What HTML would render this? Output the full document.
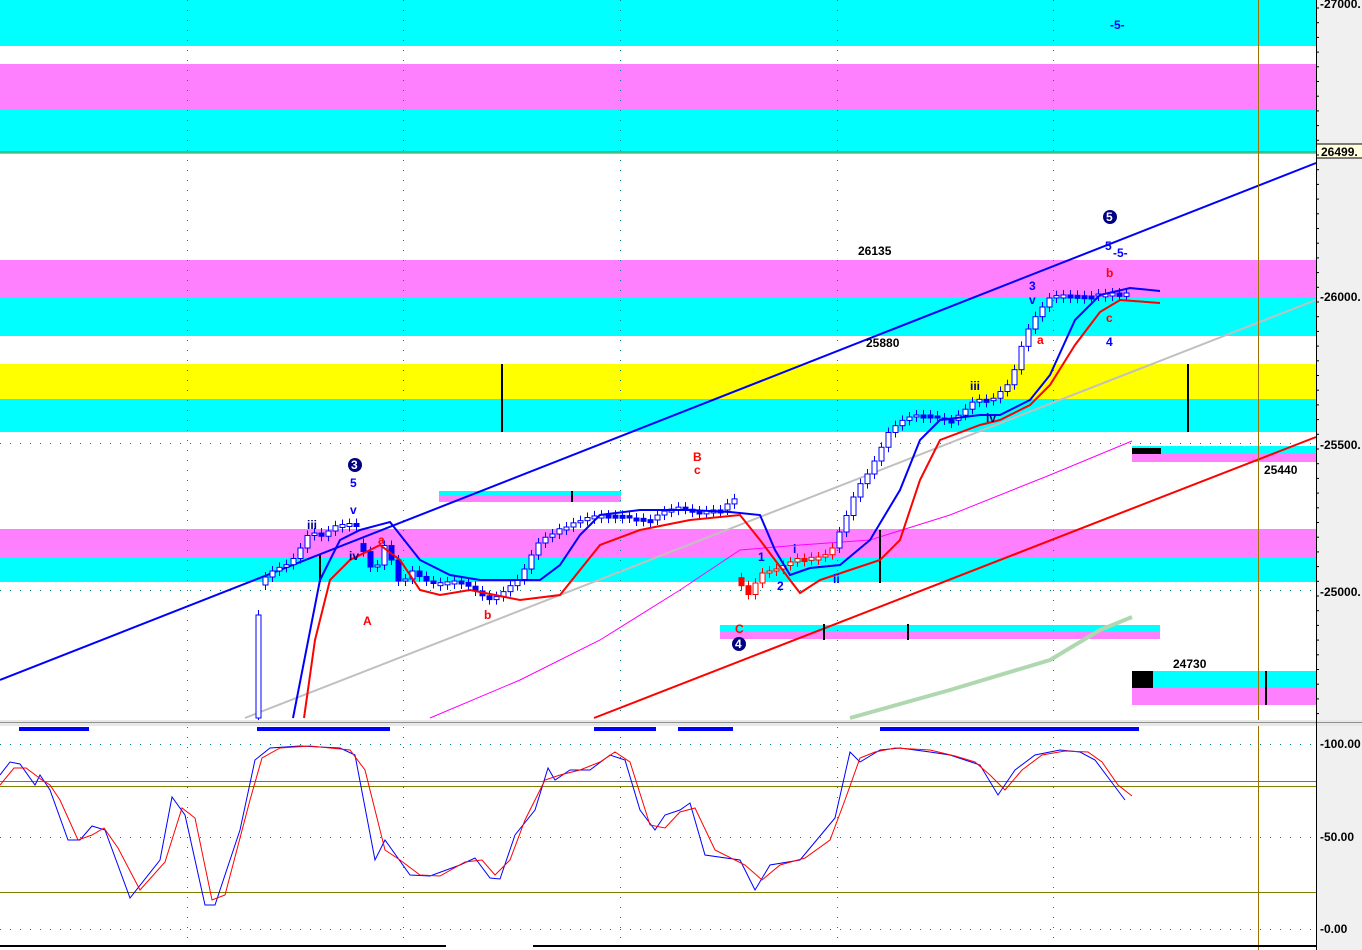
<!DOCTYPE html>
<html><head><meta charset="utf-8"><style>
html,body{margin:0;padding:0;background:#fff;width:1362px;height:950px;overflow:hidden}
svg{display:block}
text{font-family:"Liberation Sans",sans-serif;font-weight:bold;font-size:12px}
</style></head><body>
<svg id="s" width="1362" height="950" xmlns="http://www.w3.org/2000/svg">
<rect x="0" y="0" width="1362" height="950" fill="#fff"/>
<rect x="1316" y="0" width="46" height="950" fill="#f0f0f0"/>
<g>
<rect x="0" y="0" width="1316" height="46" fill="#00ffff"/>
<rect x="0" y="64" width="1316" height="45" fill="#ff80ff"/>
<rect x="0" y="109" width="1316" height="45" fill="#00ffff"/>
<rect x="0" y="260" width="1316" height="37" fill="#ff80ff"/>
<rect x="0" y="297" width="1316" height="39" fill="#00ffff"/>
<rect x="0" y="364" width="1316" height="35" fill="#ffff00"/>
<rect x="0" y="399" width="1316" height="33" fill="#00ffff"/>
<rect x="0" y="529" width="1316" height="28" fill="#ff80ff"/>
<rect x="0" y="557" width="1316" height="25" fill="#00ffff"/>
<rect x="439" y="491" width="182" height="5" fill="#00ffff"/>
<rect x="439" y="496" width="182" height="6" fill="#ff80ff"/>
<rect x="1132" y="446" width="184" height="8" fill="#00ffff"/>
<rect x="1132" y="454" width="184" height="8" fill="#ff80ff"/>
<rect x="720" y="625" width="440" height="7" fill="#00ffff"/>
<rect x="720" y="632" width="440" height="7" fill="#ff80ff"/>
<rect x="1132" y="671" width="184" height="17" fill="#00ffff"/>
<rect x="1132" y="688" width="184" height="17" fill="#ff80ff"/>
<rect x="1132" y="671" width="21" height="17" fill="#000"/>
<rect x="1132" y="448" width="29" height="6" fill="#000"/>
</g>
<line x1="0" y1="152" x2="1316" y2="152" stroke="#808000" stroke-width="1"/>
<g id="grid" stroke="#008080" stroke-dasharray="1 9" stroke-width="1">
<line x1="0" y1="443.5" x2="1316" y2="443.5"/>
<line x1="0" y1="590.5" x2="1316" y2="590.5"/>
<line x1="187.5" y1="0" x2="187.5" y2="720"/>
<line x1="403.5" y1="0" x2="403.5" y2="720"/>
<line x1="620.5" y1="0" x2="620.5" y2="720"/>
<line x1="837.5" y1="0" x2="837.5" y2="720"/>
<line x1="1053.5" y1="0" x2="1053.5" y2="720"/>
<line x1="0" y1="744.5" x2="1316" y2="744.5"/>
<line x1="0" y1="837.5" x2="1316" y2="837.5"/>
<line x1="0" y1="929.5" x2="1316" y2="929.5"/>
<line x1="187.5" y1="727" x2="187.5" y2="945"/>
<line x1="403.5" y1="727" x2="403.5" y2="945"/>
<line x1="620.5" y1="727" x2="620.5" y2="945"/>
<line x1="837.5" y1="727" x2="837.5" y2="945"/>
<line x1="1053.5" y1="727" x2="1053.5" y2="945"/>
</g>
<line x1="0" y1="680" x2="1316" y2="163" stroke="#0000ff" stroke-width="2"/>
<line x1="594" y1="718" x2="1316" y2="437" stroke="#ff0000" stroke-width="2"/>
<line x1="245" y1="718" x2="1316" y2="300" stroke="#c0c0c0" stroke-width="2"/>
<polyline fill="none" stroke="#ff00ff" stroke-width="1" points="430,718 520,680 600,640 680,590 740,550 800,545 870,540 950,515 1050,475 1132,441"/>
<polyline fill="none" stroke="#b0d8b0" stroke-width="4" points="850,718 950,690 1050,660 1100,630 1132,617"/>
<g stroke="#000" stroke-width="2">
<line x1="502" y1="364" x2="502" y2="432"/>
<line x1="1188" y1="364" x2="1188" y2="432"/>
<line x1="1266" y1="671" x2="1266" y2="705"/>
<line x1="572" y1="491" x2="572" y2="502"/>
<line x1="824" y1="624" x2="824" y2="640"/>
<line x1="908" y1="624" x2="908" y2="640"/>
<line x1="880" y1="530" x2="880" y2="583"/>
<line x1="320" y1="555" x2="320" y2="582"/>
</g>
<g id="candles"></g>
<polyline fill="none" stroke="#0000ff" stroke-width="2" points="293,718 320,580 340,540 360,530 390,522 420,560 450,575 480,580 540,580 560,565 580,535 600,515 640,510 690,510 730,512 760,515 775,550 790,575 810,568 840,565 870,540 900,490 920,440 940,420 980,415 1000,415 1030,400 1050,375 1075,320 1100,295 1130,288 1160,291"/>
<polyline fill="none" stroke="#ff0000" stroke-width="2" points="304,718 315,640 330,580 350,560 380,545 400,560 420,590 440,595 470,590 520,600 560,595 580,570 600,545 640,530 690,520 740,515 760,540 790,580 800,593 820,580 850,570 880,560 900,540 920,480 940,440 980,425 1000,420 1030,405 1050,385 1075,345 1100,312 1120,300 1160,303"/>
<line x1="1258.5" y1="0" x2="1258.5" y2="950" stroke="#a07000" stroke-width="1"/>
<g fill="#0000ff">
<text x="1110" y="29" font-size="11">-5-</text>
<text x="1105" y="250">5</text><text x="1113" y="257" font-size="11">-5-</text>
<text x="1029" y="290">3</text><text x="1029" y="304">v</text>
<text x="1106" y="346">4</text>
<text x="350" y="487">5</text><text x="350" y="514">v</text>
<text x="758" y="561">1</text><text x="777" y="590">2</text>
<text x="793" y="553">i</text><text x="833" y="583">ii</text>
</g>
<g fill="#000080">
<text x="970" y="390">iii</text><text x="986" y="422">iv</text>
<text x="307" y="529">iii</text><text x="349" y="560">iv</text>
</g>
<g fill="#ff0000">
<text x="1106" y="277">b</text><text x="1106" y="322">c</text>
<text x="1037" y="344">a</text>
<text x="693" y="461">B</text><text x="694" y="474">c</text>
<text x="378" y="544">a</text><text x="363" y="625">A</text>
<text x="484" y="619">b</text><text x="735" y="633">C</text>
</g>
<g fill="#000">
<text x="858" y="255">26135</text>
<text x="866" y="347">25880</text>
<text x="1264" y="474">25440</text>
<text x="1173" y="668">24730</text>
</g>
<g font-size="11">
<circle cx="1110" cy="217" r="7" fill="#000080"/><text x="1106" y="221" fill="#fff" font-size="11">5</text>
<circle cx="355" cy="465" r="7" fill="#000080"/><text x="351" y="469" fill="#fff" font-size="11">3</text>
<circle cx="739" cy="644" r="7" fill="#000080"/><text x="735" y="648" fill="#fff" font-size="11">4</text>
</g>
<rect x="0" y="720" width="1362" height="6" fill="#e8e8e8"/>
<line x1="0" y1="722.5" x2="1362" y2="722.5" stroke="#909090"/>
<line x1="1316.5" y1="0" x2="1316.5" y2="950" stroke="#000"/>
<g fill="#000" font-size="12">
<text x="1320" y="8">-27000.</text>
<text x="1320" y="301">-26000.</text>
<text x="1320" y="449">-25500.</text>
<text x="1320" y="596">-25000.</text>
<text x="1320" y="748">-100.00</text>
<text x="1320" y="841">-50.00</text>
<text x="1320" y="933">-0.00</text>
</g>
<rect x="1317" y="144" width="45" height="14" fill="#ffffe0"/>
<line x1="1317" y1="144" x2="1362" y2="144" stroke="#000"/>
<line x1="1317" y1="158" x2="1362" y2="158" stroke="#000"/>
<text x="1321" y="156" fill="#000">26499.</text>
<g id="ticks" stroke="#000"></g>
<g fill="#0000ff">
<rect x="19" y="727" width="70" height="4"/>
<rect x="257" y="727" width="133" height="4"/>
<rect x="594" y="727" width="62" height="4"/>
<rect x="678" y="727" width="55" height="4"/>
<rect x="880" y="727" width="259" height="4"/>
</g>
<line x1="0" y1="781.5" x2="1316" y2="781.5" stroke="#808000"/>
<line x1="0" y1="786.5" x2="1316" y2="786.5" stroke="#808000"/>
<line x1="0" y1="892.5" x2="1316" y2="892.5" stroke="#808000"/>
<polyline fill="none" stroke="#0000ff" stroke-width="1" points="0,775 10,762 20,764 35,785 40,775 50,790 68,840 80,840 92,826 105,830 130,898 160,860 172,797 185,815 205,905 215,905 240,830 255,760 270,748 300,746 340,748 355,755 375,860 385,840 410,875 430,876 460,865 475,858 490,878 500,879 515,835 535,810 548,768 555,780 570,770 590,770 610,755 625,760 640,810 655,830 665,815 680,810 690,803 705,855 740,860 755,890 770,865 800,860 825,830 835,818 850,752 860,762 880,750 900,748 930,752 950,755 965,760 980,765 998,795 1015,770 1035,755 1060,750 1080,752 1095,760 1110,780 1125,800"/>
<polyline fill="none" stroke="#ff0000" stroke-width="1" points="0,785 14,768 26,768 42,780 50,785 60,800 78,840 92,835 104,828 118,848 140,890 165,862 182,808 195,818 212,900 225,895 250,800 262,758 280,748 310,746 350,750 365,770 385,850 400,860 420,875 440,876 465,862 482,860 495,875 510,860 525,820 545,780 560,775 580,770 600,762 615,752 630,762 650,825 665,828 680,812 695,808 715,850 745,865 762,880 780,865 805,858 830,840 845,800 860,758 875,752 895,748 930,750 955,756 975,762 990,775 1005,790 1022,770 1042,755 1065,751 1088,752 1102,762 1118,785 1132,796"/>
<g stroke="#000" stroke-width="2">
<line x1="0" y1="946" x2="446" y2="946"/>
<line x1="533" y1="946" x2="1316" y2="946"/>
</g>
</svg>
<script>
(function(){
var NS="http://www.w3.org/2000/svg";
var s=document.getElementById('candles');
var k=[[258,618],[265,580],[275,570],[290,560],[310,530],[320,540],[340,525],[358,520],[365,560],[375,570],[385,545],[400,590],[410,570],[430,580],[460,585],[490,597],[520,580],[540,540],[560,525],[590,520],[620,512],[650,522],[680,505],[700,510],[720,513],[735,500],[742,600],[750,590],[760,570],[780,570],[800,560],[830,550],[845,520],[855,495],[870,470],[890,425],[905,418],[950,418],[975,400],[990,405],[1010,380],[1025,330],[1040,310],[1050,300],[1080,293],[1100,293],[1112,295],[1120,300],[1132,292]];
function yAt(x){for(var i=1;i<k.length;i++){if(x<=k[i][0]){var a=k[i-1],b=k[i];return a[1]+(b[1]-a[1])*(x-a[0])/(b[0]-a[0]);}}return k[k.length-1][1];}
var prev=718;
for(var x=258;x<=1132;x+=7){
 var c=yAt(x)+((Math.sin(x*1.7)*4)|0);
 var o=prev; if(x<262)o=718;
 if(x>262 && Math.abs(c-o)>25){o=c+(c>o?-8:8);}
 var top=Math.min(o,c),bot=Math.max(o,c); if(bot-top<2){bot=top+3;}
 var up=c<o;
 var col=(x>735&&x<835)?'#ff0000':'#0000ff';
 var w=document.createElementNS(NS,'line');
 w.setAttribute('x1',x+0.5);w.setAttribute('x2',x+0.5);w.setAttribute('y1',top-5);w.setAttribute('y2',bot+5);w.setAttribute('stroke',col);s.appendChild(w);
 var r=document.createElementNS(NS,'rect');
 r.setAttribute('x',x-2);r.setAttribute('y',top);r.setAttribute('width',5);r.setAttribute('height',bot-top);
 r.setAttribute('fill',up?'#fff':col);r.setAttribute('stroke',col);s.appendChild(r);
 prev=c;
}
var t=document.getElementById('ticks');
for(var y=8;y<720;y+=14.7){var l=document.createElementNS(NS,'line');l.setAttribute('x1',1317);l.setAttribute('x2',1319);l.setAttribute('y1',y);l.setAttribute('y2',y);t.appendChild(l);}
})();
</script>
</body></html>
